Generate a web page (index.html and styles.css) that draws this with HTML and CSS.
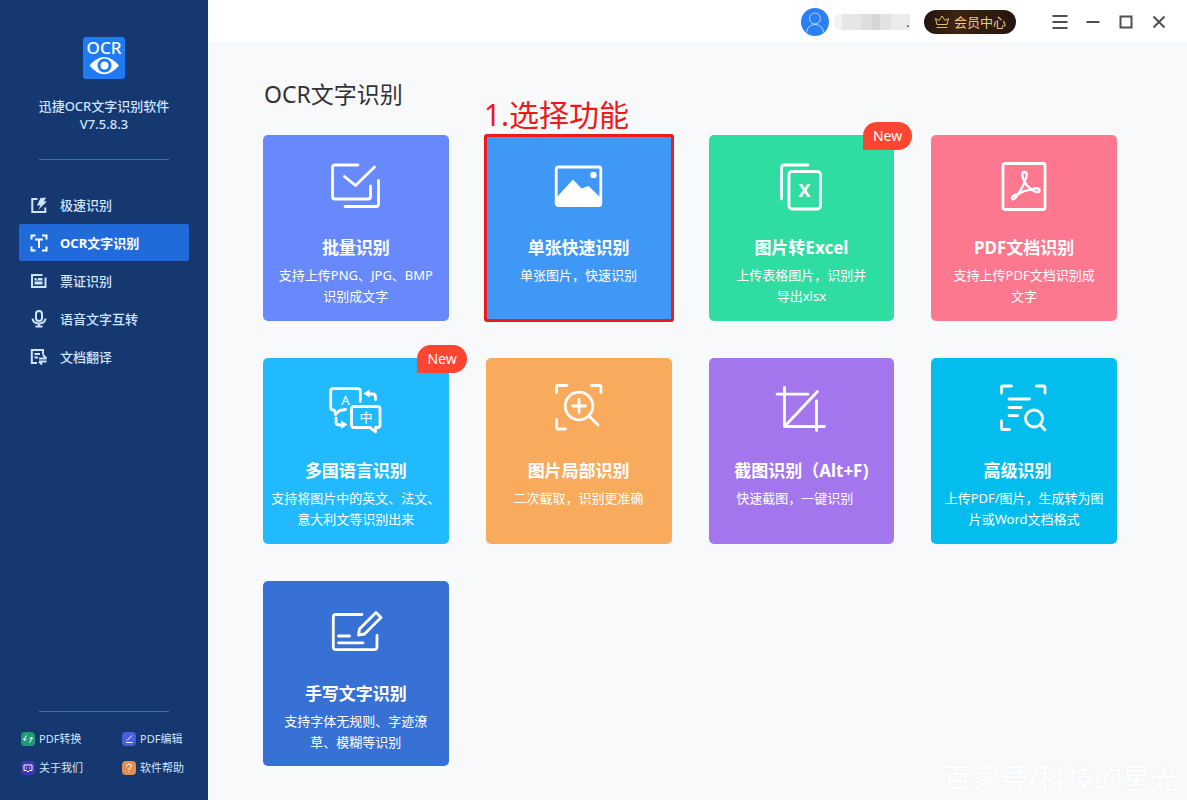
FILE: index.html
```html
<!DOCTYPE html>
<html lang="zh-CN">
<head>
<meta charset="utf-8">
<meta name="viewport" content="width=device-width, initial-scale=1">
<title>迅捷OCR文字识别软件</title>
<link rel="stylesheet" href="styles.css">
</head>
<body>
<div class="app">
  <aside class="sidebar">
    <div class="brand">
      <svg class="brand-logo" viewBox="0 0 42 42" aria-hidden="true">
        <rect width="42" height="42" rx="3" fill="#1f7bf2"/>
        <text x="21" y="17" text-anchor="middle" class="logo-text">OCR</text>
        <path d="M6.500 28.500Q21 11.500 36 28.500Q21 46 6.500 28.500Z" fill="#fff"/>
        <circle cx="21.500" cy="28.500" r="5.500" fill="#fff" stroke="#1f7bf2" stroke-width="3"/>
      </svg>
      <p class="brand-name">迅捷OCR文字识别软件<br>V7.5.8.3</p>
    </div>
    <nav class="nav">
      <a class="nav-item" href="#fast">
        <svg class="nav-icon" viewBox="0 0 18 18" aria-hidden="true"><path d="M7.500 3H2.300V16H15.300V11.500"/><path class="solid" d="M10.500 2L16 1.500L14 5.500H17L8 14L10.500 9.500H7Z"/></svg>
        极速识别</a>
      <a class="nav-item nav-item--active" href="#ocr" aria-current="page">
        <svg class="nav-icon" viewBox="0 0 18 18" aria-hidden="true"><path d="M1.500 5.500V1.500H5.500M12 1.500H16.500V5.500M1.500 12.500V16.500H5.500M12 16.500H16.500V12.500M5 5.500H13M9 5.500V14"/></svg>
        OCR文字识别</a>
      <a class="nav-item" href="#ticket">
        <svg class="nav-icon" viewBox="0 0 18 18" aria-hidden="true"><path d="M12.500 3H2V15H15.500V5.500"/><path class="solid" d="M4.500 6H6.500V7.500H8V6H12.500V8.500H4.500ZM4.500 9.500H12.500V12.500H4.500Z"/></svg>
        票证识别</a>
      <a class="nav-item" href="#voice">
        <svg class="nav-icon" viewBox="0 0 18 18" aria-hidden="true"><rect x="6" y="1" width="6" height="10" rx="3"/><path d="M2.500 8.500Q3 13.500 9 13.500Q15 13.500 15.500 8.500M9 13.500V16M5.500 16.500H12.500"/></svg>
        语音文字互转</a>
      <a class="nav-item" href="#translate">
        <svg class="nav-icon" viewBox="0 0 18 18" aria-hidden="true"><path d="M7 15H1.800V2H13V6.500M4.500 6H10M4.500 9.500H8M16.500 10.500H9M13 7L16.500 10.500M9 13.500H16.500M9 13.500L12 16.500"/></svg>
        文档翻译</a>
    </nav>
    <div class="links">
      <a class="link" href="#convert">
        <svg class="link-icon" viewBox="0 0 14 14" aria-hidden="true"><rect width="14" height="14" rx="4" fill="#1d9c77"/><path d="M6 3.500Q3.500 4.500 3.500 8M2 6.500L3.500 8.500L5.500 7M8 10.500Q10.500 9.500 10.500 6M8.500 7L10.500 5L12 7"/></svg>
        PDF转换</a>
      <a class="link" href="#edit">
        <svg class="link-icon" viewBox="0 0 14 14" aria-hidden="true"><rect width="14" height="14" rx="4" fill="#4a5ee0"/><path d="M4 10.500H10.500M5 8.500L10 3.500"/></svg>
        PDF编辑</a>
      <a class="link" href="#about">
        <svg class="link-icon" viewBox="0 0 14 14" aria-hidden="true"><rect width="14" height="14" rx="4" fill="#4335ad"/><path d="M3 4H11V9.500H8.500L7 11L5.500 9.500H3ZM5 7H6M8 7H9"/></svg>
        关于我们</a>
      <a class="link" href="#help">
        <svg class="link-icon" viewBox="0 0 14 14" aria-hidden="true"><rect width="14" height="14" rx="4" fill="#df8e54"/><path d="M4.500 5.500Q4.500 3 7 3Q9.500 3 9.500 5.200Q9.500 6.500 7 8V9M7 10.500V11.500"/></svg>
        软件帮助</a>
    </div>
  </aside>

  <div class="content">
    <header class="topbar">
      <svg class="avatar" viewBox="0 0 28 28" role="img" aria-label="用户头像"><circle class="avatar-disc" cx="14" cy="14" r="14"/><circle cx="14" cy="10.500" r="5.500"/><path d="M5.500 24.500Q6.500 16.500 14 16.500Q21.500 16.500 22.500 24.500"/></svg>
      <div class="username"><span class="username-mask"></span><span class="username-dot">.</span></div>
      <button class="vip" type="button">
        <svg class="vip-icon" viewBox="0 0 16 14" aria-hidden="true"><path d="M3 9.500L1.500 3.500L5 5.500L8 1L11 5.500L14.500 3.500L13 9.500ZM2.500 12.500H13.500"/></svg>
        会员中心</button>
      <div class="window-controls">
        <button class="window-button" type="button" aria-label="菜单"><svg viewBox="0 0 16 16"><path d="M.500 2H15.500M.500 8H15.500M.500 14H15.500"/></svg></button>
        <button class="window-button" type="button" aria-label="最小化"><svg viewBox="0 0 16 16"><path d="M1.500 8H14.500"/></svg></button>
        <button class="window-button" type="button" aria-label="最大化"><svg viewBox="0 0 16 16"><path d="M2.500 2.500H13.500V13.500H2.500Z"/></svg></button>
        <button class="window-button" type="button" aria-label="关闭"><svg viewBox="0 0 16 16"><path d="M2.500 2.500L13.500 13.500M13.500 2.500L2.500 13.500"/></svg></button>
      </div>
    </header>

    <main class="main">
      <h1 class="heading">OCR文字识别</h1>
      <div class="cards">
        <a class="card card--indigo" href="#batch">
          <svg class="card-icon" viewBox="0 0 56 56" aria-hidden="true"><path d="M30 7H7Q4.500 7 4.500 9.500V38.500Q4.500 41 7 41H40Q42.500 41 42.500 38.500V28M16.500 18.500L27.500 27.500L46.500 9M50.500 22.500V46Q50.500 48.500 48 48.500H17"/></svg>
          <h2 class="card-title">批量识别</h2>
          <p class="card-text">支持上传PNG、JPG、BMP<br>识别成文字</p>
        </a>
        <a class="card card--blue card--marked" href="#single">
          <span class="callout">1.选择功能</span>
          <svg class="card-icon" viewBox="0 0 56 56" aria-hidden="true"><rect x="5.200" y="9" width="44.600" height="38.500" rx="2"/><path class="solid" d="M6 39L22 21.500L30.500 30.500L37.500 28L49 39V47H6Z"/><circle class="solid" cx="42.500" cy="17" r="3.200"/></svg>
          <h2 class="card-title">单张快速识别</h2>
          <p class="card-text">单张图片，快速识别</p>
        </a>
        <a class="card card--green" href="#excel">
          <span class="badge">New</span>
          <svg class="card-icon" viewBox="0 0 56 56" aria-hidden="true"><path d="M8.500 41V10Q8.500 7 11.500 7H35"/><rect x="16" y="13.500" width="31.500" height="37.500" rx="3"/><text class="icon-x" x="31.500" y="38.500" text-anchor="middle">X</text></svg>
          <h2 class="card-title">图片转Excel</h2>
          <p class="card-text">上传表格图片，识别并<br>导出xlsx</p>
        </a>
        <a class="card card--pink" href="#pdf">
          <svg class="card-icon" viewBox="0 0 56 56" aria-hidden="true"><rect x="7" y="5.500" width="42" height="46" rx="2"/><path class="thin" d="M28.500 23C25.500 19 25.500 14 28.500 14C31.500 14 31.500 19 28.500 23C28 28 24 33 21.500 36.500C20 40.500 16.500 42.500 16 40.500C15.500 38.500 18.500 36.500 21.500 36.500C26 33.500 31 32 36 31.500C39.500 29.500 43.500 30 43.500 32.500C43 35 38.500 34.500 36 31.500C32.500 29.500 29.500 26.500 28.500 23Z"/></svg>
          <h2 class="card-title">PDF文档识别</h2>
          <p class="card-text">支持上传PDF文档识别成<br>文字</p>
        </a>
        <a class="card card--sky" href="#languages">
          <span class="badge">New</span>
          <svg class="card-icon" viewBox="0 0 56 56" aria-hidden="true"><path d="M32.300 20.500V10Q32.300 7.700 30 7.700H5Q2.700 7.700 2.700 10V27Q2.700 29 6.500 29.300L7.500 33.500L11.500 29.500L17.500 28.500"/><path d="M26 25.500H49.500Q52 25.500 52 28V44Q52 46.500 49.500 46.500H47.500V51L42 46.500H26Q23.500 46.500 23.500 44V28Q23.500 25.500 26 25.500Z"/><path d="M47.500 18.500V16Q47.500 13 44.500 13H39M8 37V41Q8 44 11 44H15"/><path class="solid" d="M41.500 8.500V16.500L35.500 12.500ZM13 39.500V48L19.500 43.500Z"/><text class="icon-glyph" x="17.500" y="23.500" text-anchor="middle">A</text><text class="icon-glyph" x="38" y="40.500" text-anchor="middle">中</text></svg>
          <h2 class="card-title">多国语言识别</h2>
          <p class="card-text">支持将图片中的英文、法文、<br>意大利文等识别出来</p>
        </a>
        <a class="card card--orange" href="#region">
          <svg class="card-icon" viewBox="0 0 56 56" aria-hidden="true"><path d="M5.500 11.500V6Q5.500 4.500 7 4.500H16M40.500 4.500H48.500Q50 4.500 50 6V11.500M5.500 38.500V46.500Q5.500 48 7 48H14.500"/><circle cx="28" cy="25" r="13.800"/><path d="M21.500 25H34.500M28 18.500V31.500M38.500 35.500L47 44"/></svg>
          <h2 class="card-title">图片局部识别</h2>
          <p class="card-text">二次截取，识别更准确</p>
        </a>
        <a class="card card--purple" href="#capture">
          <svg class="card-icon" viewBox="0 0 56 56" aria-hidden="true"><path d="M11.500 6.500V45.500H51.500M4 13.200H35M43.500 20V49.500M12 45L44.500 10.500"/></svg>
          <h2 class="card-title">截图识别（Alt+F)</h2>
          <p class="card-text">快速截图，一键识别&emsp;</p>
        </a>
        <a class="card card--cyan" href="#advanced">
          <svg class="card-icon" viewBox="0 0 56 56" aria-hidden="true"><path d="M5.500 12V6.500Q5.500 5 7 5H15.500M40.500 5H47.500Q49 5 49 6.500V12M5.500 40V47Q5.500 48.500 7 48.500H13.500M13 18H33.500M13 26.500H25M13 34.700H21.500"/><circle cx="38" cy="37.500" r="8.500"/><path d="M44 43.500L49 49"/></svg>
          <h2 class="card-title">高级识别&nbsp;&nbsp;&nbsp;</h2>
          <p class="card-text">上传PDF/图片，生成转为图<br>片或Word文档格式</p>
        </a>
        <a class="card card--royal" href="#handwriting">
          <svg class="card-icon" viewBox="0 0 56 56" aria-hidden="true"><path d="M34 10.500H8Q5.300 10.500 5.300 13V43Q5.300 45.700 8 45.700H46Q49 45.700 49 43V31.500M10.500 32H21.500M10.500 38.800H35M30.500 31L31.500 25L48 8.500L53 13.500L36.500 30Z"/></svg>
          <h2 class="card-title">手写文字识别</h2>
          <p class="card-text">支持字体无规则、字迹潦<br>草、模糊等识别</p>
        </a>
      </div>
    </main>
    <div class="watermark">百家号/科技的星光</div>
  </div>
</div>
</body>
</html>
```
FILE: styles.css
```css
* {
  box-sizing: border-box;
}

body {
  margin: 0;
  font-family: "Noto Sans", "Noto Sans CJK SC", sans-serif;
  font-size: 13px;
  color: #333;
}

h1,
h2,
p {
  margin: 0;
}

a {
  color: inherit;
  text-decoration: none;
}

button {
  border: 0;
  font: inherit;
  cursor: pointer;
}

svg {
  fill: none;
  flex: none;
}

.app {
  display: flex;
  min-height: 100vh;
}

/* Sidebar */

.sidebar {
  display: flex;
  flex: none;
  flex-direction: column;
  width: 208px;
  padding: 37px 19px 22px;
  background: #163870;
  color: #cfe4ff;
}

.brand {
  display: flex;
  flex-direction: column;
  align-items: center;
  margin: 0 20px;
  padding-bottom: 26px;
  border-bottom: 1px solid #426ba8;
}

.brand-logo {
  width: 42px;
  height: 42px;
  overflow: visible;
}

.logo-text {
  fill: #fff;
  font-size: 17px;
  font-weight: 500;
}

.brand-name {
  margin-top: 18px;
  font-weight: 500;
  line-height: 18px;
  text-align: center;
  white-space: nowrap;
}

.nav {
  display: flex;
  flex-direction: column;
  gap: 1px;
  margin-top: 26px;
}

.nav-item {
  display: flex;
  align-items: center;
  gap: 12px;
  height: 37px;
  padding-left: 11px;
  border-radius: 2px;
  font-weight: 500;
}

.nav-item--active {
  background: #206bd9;
  color: #fff;
  font-weight: 700;
}

.nav-icon {
  width: 18px;
  height: 18px;
  stroke: currentColor;
  stroke-width: 2;
}

.nav-icon .solid {
  fill: currentColor;
  stroke: none;
}

.links {
  position: relative;
  display: grid;
  grid-template-columns: 1fr 1fr;
  column-gap: 34px;
  row-gap: 9px;
  margin-top: auto;
  padding: 18px 0 0 2px;
}

.links::before {
  content: "";
  position: absolute;
  top: 0;
  right: 20px;
  left: 20px;
  height: 1px;
  background: #426ba8;
}

.link {
  display: flex;
  align-items: center;
  gap: 4px;
  font-size: 11px;
  line-height: 20px;
  white-space: nowrap;
}

.link-icon {
  width: 14px;
  height: 14px;
}

.link-icon path {
  stroke: #fff;
}

/* Title bar */

.content {
  position: relative;
  flex: 1;
  min-width: 0;
  background: #f8f9fb;
}

.topbar {
  display: flex;
  align-items: center;
  justify-content: flex-end;
  height: 42px;
  padding: 2px 12px 0 0;
  background: #fff;
}

.avatar {
  width: 28px;
  height: 28px;
  stroke: #b9d6ff;
}

.avatar-disc {
  fill: #2b7ff5;
  stroke: none;
}

.username {
  display: flex;
  align-items: center;
  width: 76px;
  margin: 0 14px 0 5px;
}

.username-mask {
  flex: 1;
  height: 16px;
  border-radius: 6px 0 0 6px;
  background: linear-gradient(90deg, #f3f3f3 0 10%, #e6e6e6 10% 35%, #dedede 35% 50%, #d6d6d6 50% 60%, #e2e2e2 60% 75%, #ececec 75%);
}

.username-dot {
  width: 4px;
  margin-left: -4px;
  line-height: 18px;
}

.vip {
  display: flex;
  align-items: center;
  gap: 4px;
  height: 24px;
  padding: 0 10px;
  border-radius: 12px;
  background: linear-gradient(90deg, #21150f, #3e2411 35%, #231610);
  color: #f2c585;
  line-height: 20px;
  white-space: nowrap;
}

.vip-icon {
  width: 16px;
  height: 14px;
  stroke: #e9bc6d;
}

.window-controls {
  display: flex;
  margin-left: 27px;
}

.window-button {
  display: grid;
  place-items: center;
  width: 33px;
  height: 33px;
  padding: 0;
  background: none;
}

.window-button svg {
  width: 16px;
  height: 16px;
  stroke: #505050;
  stroke-width: 2;
}

/* Feature cards */

.main {
  padding: 36px 70px 34px 55px;
}

.heading {
  padding-left: 1px;
  font-size: 23px;
  font-weight: 400;
  line-height: 32px;
}

.cards {
  display: grid;
  grid-template-columns: repeat(4, 1fr);
  gap: 37px;
  margin-top: 25px;
}

.card {
  position: relative;
  display: flex;
  flex-direction: column;
  align-items: center;
  aspect-ratio: 1;
  padding-top: 23px;
  border-radius: 5px;
  color: #fff;
  text-align: center;
  white-space: nowrap;
}

.card--indigo { background: #6889fb; }
.card--blue { background: #3f97f6; }
.card--green { background: #2fdda3; }
.card--pink { background: #fc788f; }
.card--sky { background: #22baff; }
.card--orange { background: #f8aa5d; }
.card--purple { background: #a376ee; }
.card--cyan { background: #03bdee; }
.card--royal { background: #3771d5; }

.card--marked::before {
  content: "";
  position: absolute;
  inset: -1px -2px;
  border: 3px solid #ec1c1c;
  border-radius: 3px;
}

.card-icon {
  width: 56px;
  height: 56px;
  stroke: #fff;
  stroke-width: 2.800;
  stroke-linecap: round;
  stroke-linejoin: round;
}

.card-icon .solid {
  fill: #fff;
  stroke: none;
}

.card-icon .thin {
  stroke-width: 2.400;
}

.card-icon text {
  fill: #fff;
  stroke: none;
}

.icon-x {
  font-size: 18px;
  font-weight: 700;
}

.icon-glyph {
  font-size: 13px;
}

.card-title {
  margin-top: 22px;
  font-size: 17px;
  font-weight: 700;
  line-height: 24px;
}

.card-text {
  margin-top: 5px;
  line-height: 21px;
}

.badge {
  position: absolute;
  top: -13px;
  right: -18px;
  padding: 0 10px;
  border-radius: 14px 14px 14px 0;
  background: #fd4532;
  font-size: 14px;
  line-height: 28px;
}

.callout {
  position: absolute;
  bottom: 100%;
  left: -2px;
  color: #f01818;
  font-size: 30px;
  line-height: 40px;
}

.watermark {
  position: absolute;
  right: 9px;
  bottom: 4px;
  color: #fff;
  font-size: 28px;
  line-height: 36px;
  text-shadow: 0 0 2px #eff0f2;
}
```
